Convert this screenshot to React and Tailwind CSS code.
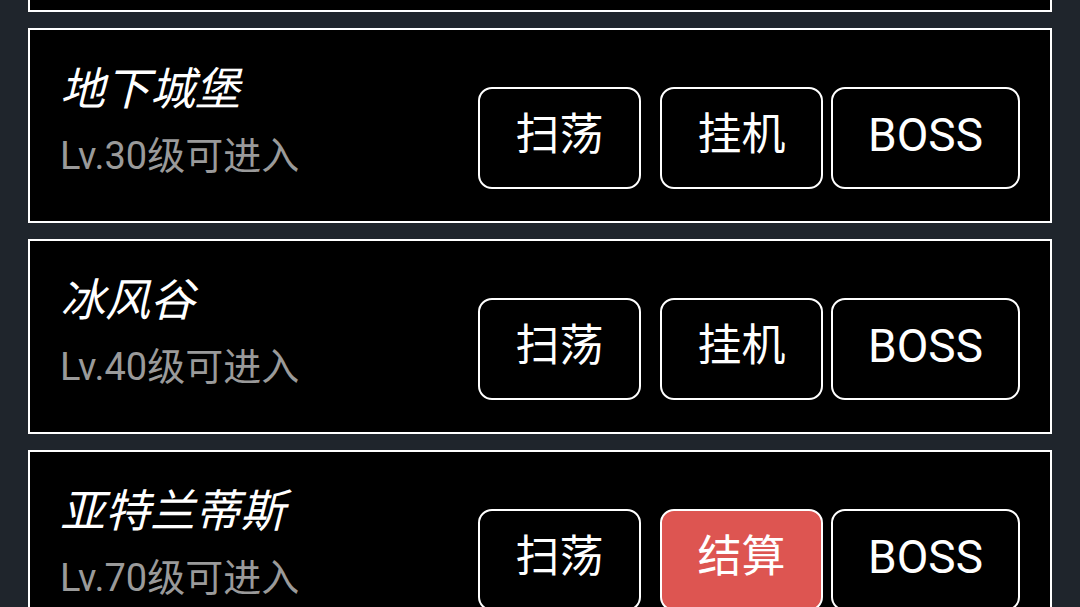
import React from 'react';

const DUNGEONS = [
  { name: '深渊回廊', level: 20, mid: '挂机' },
  { name: '地下城堡', level: 30, mid: '挂机' },
  { name: '冰风谷', level: 40, mid: '挂机' },
  { name: '亚特兰蒂斯', level: 70, mid: '结算', active: true },
];

const FONT = { fontFamily: 'Roboto, "Noto Sans CJK SC", sans-serif' };

const Btn = ({ children, className = '' }) => (
  <button
    className={`h-[102px] rounded-[14px] border-2 border-white text-white leading-none pb-[6px] flex items-center justify-center ${className}`}
  >
    {children}
  </button>
);

const DungeonCard = ({ d }) => (
  <div className="h-[195px] shrink-0 border-2 border-white bg-black px-[30px] flex justify-between items-start">
    <div className="pt-[33px] flex flex-col">
      <h2 className="text-[45px] leading-[54px] italic text-white">{d.name}</h2>
      <p className="mt-[17px] text-[38px] leading-[44px] text-[#9a9a9a]">Lv.{d.level}级可进入</p>
    </div>
    <div className="mt-[57px] flex items-center">
      <Btn className="w-[163px] bg-black text-[44px]">扫荡</Btn>
      <Btn className={`w-[163px] ml-[19px] text-[44px] ${d.active ? 'bg-[#dd5551]' : 'bg-black'}`}>{d.mid}</Btn>
      <Btn className="w-[189px] ml-[8px] bg-black text-[46px]">BOSS</Btn>
    </div>
  </div>
);

export default function App() {
  return (
    <div className="w-[1080px] h-[607px] overflow-hidden bg-[#1f252c]" style={FONT}>
      <div className="mt-[-183px] px-[28px] flex flex-col gap-[16px]">
        {DUNGEONS.map((d) => (
          <DungeonCard key={d.name} d={d} />
        ))}
      </div>
    </div>
  );
}
